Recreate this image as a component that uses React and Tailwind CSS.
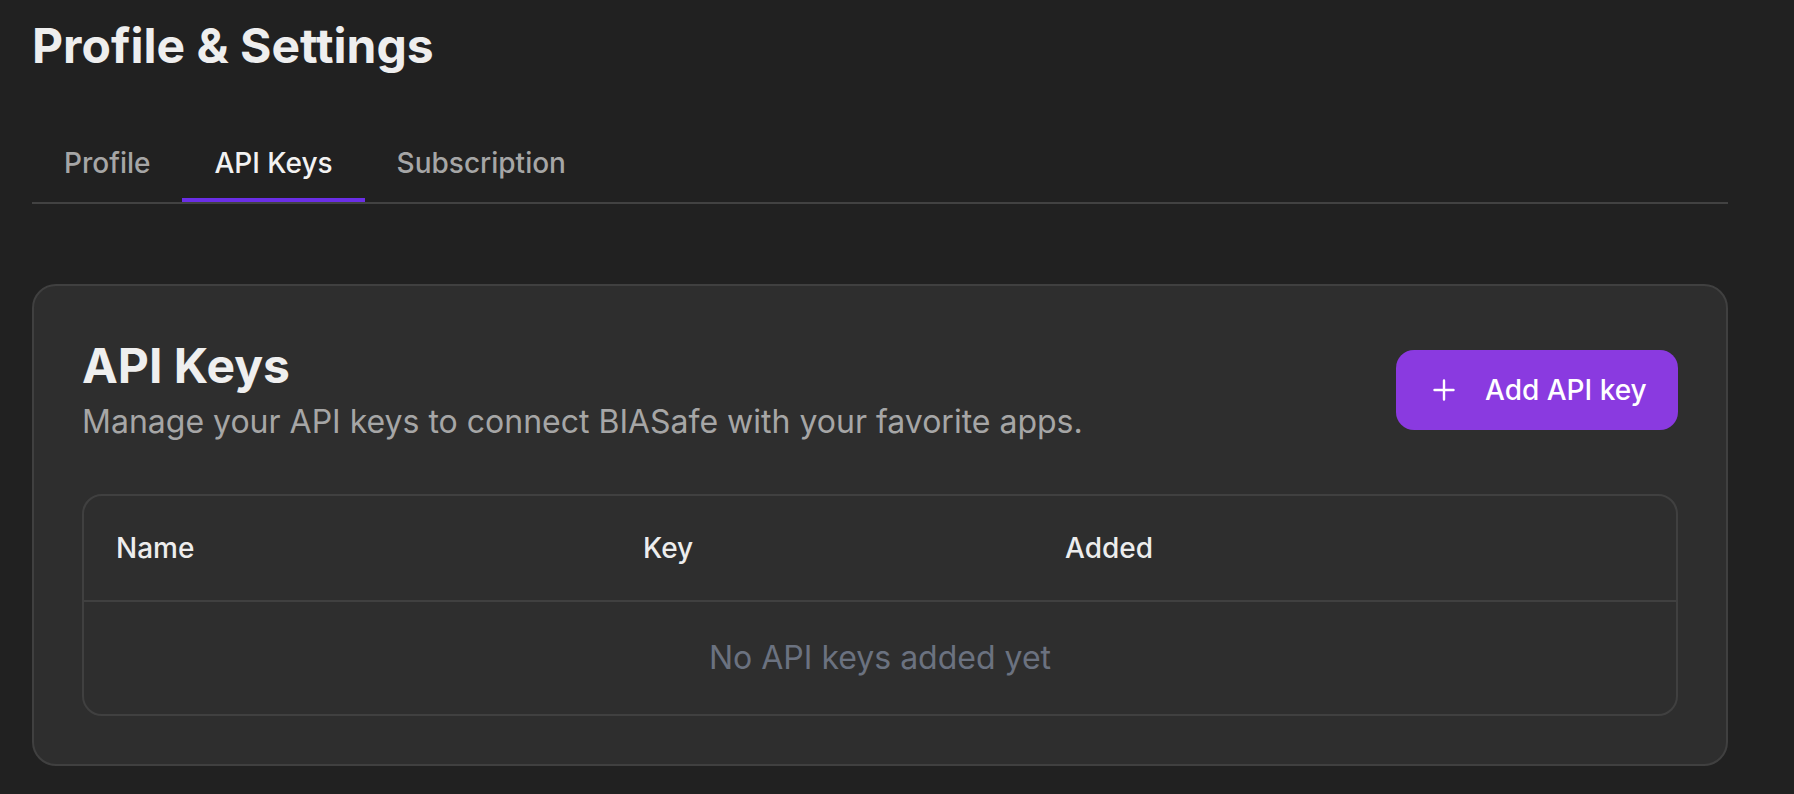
import React, { useState } from "react";

const tabs = ["Profile", "API Keys", "Subscription"];

const PlusIcon = () => (
  <svg width="22" height="22" viewBox="0 0 22 22" fill="none" stroke="currentColor" strokeWidth="2.4" strokeLinecap="round">
    <path d="M11 1.5v19M1.5 11h19" />
  </svg>
);

const App = () => {
  const [active, setActive] = useState("API Keys");

  return (
    <div className="min-h-screen w-full bg-[#212121] px-8 pt-[22px] font-['Inter',sans-serif] text-[#ededed]">
      <div className="w-[1696px]">
        <h1 className="text-[48px] leading-[48px] font-bold text-[#eeeeee]">
          Profile &amp; Settings
        </h1>

        <div className="mt-[57px] flex border-b-2 border-[#424242]">
          {tabs.map((t) => (
            <button
              key={t}
              onClick={() => setActive(t)}
              className={
                t === active
                  ? "px-8 pt-[18px] pb-[17px] text-[28px] leading-[36px] font-medium text-[#f2f2f2] border-b-4 border-[#6a2ee6]"
                  : "px-8 pt-[18px] pb-[17px] text-[28px] leading-[36px] font-medium text-[#a6a6a6] border-b-4 border-transparent"
              }
            >
              {t}
            </button>
          ))}
        </div>

        <section className="mt-20 rounded-3xl border-2 border-[#404040] bg-[#2e2e2e] px-12 pt-[52px] pb-[48px]">
          <div className="flex items-center justify-between">
            <div>
              <h2 className="text-[48px] leading-[56px] font-bold text-[#efefef]">API Keys</h2>
              <p className="mt-[8px] text-[32px] leading-[40px] text-[#a6a6a6]">
                Manage your API keys to connect BIASafe with your favorite apps.
              </p>
            </div>
            <button className="flex h-[80px] w-[282px] items-center gap-[30px] rounded-[18px] bg-[#8a3ae0] pl-[37px] text-white">
              <PlusIcon />
              <span className="text-[28px] leading-[36px] font-medium">Add API key</span>
            </button>
          </div>

          <div className="mt-[52px] overflow-hidden rounded-[20px] border-2 border-[#404040]">
            <div className="grid h-[106px] grid-cols-[527px_422px_1fr] items-center border-b-2 border-[#404040] text-[28px] font-medium text-[#ededed]">
              <div className="px-8">Name</div>
              <div className="px-8">Key</div>
              <div className="px-8">Added</div>
            </div>
            <div className="flex h-[112px] items-center justify-center text-[32px] text-[#6b7280]">
              No API keys added yet
            </div>
          </div>
        </section>
      </div>
    </div>
  );
};

export default App;
